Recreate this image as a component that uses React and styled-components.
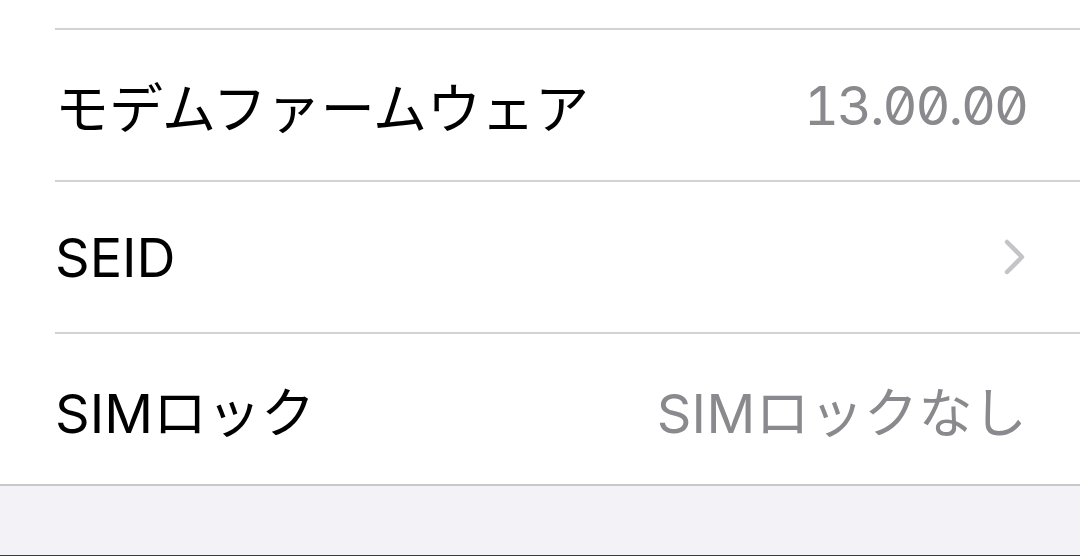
import styled, { createGlobalStyle } from "styled-components";

const GlobalStyle = createGlobalStyle`
  html, body {
    margin: 0;
    padding: 0;
    background: #f2f2f7;
  }
  body {
    font-family: "Inter", "Noto Sans CJK JP", sans-serif;
    -webkit-font-smoothing: antialiased;
  }
`;

const Page = styled.div`
  width: 1080px;
  height: 556px;
  display: flex;
  flex-direction: column;
  background: #f2f2f7;
  overflow: hidden;
  box-sizing: border-box;
  border-bottom: 1px solid #3a3a3c;
`;

const Group = styled.div`
  background: #fff;
  border-bottom: 2px solid #c8c7cc;
  padding-top: 28px;
  padding-left: 55px;
`;

const Row = styled.div`
  height: 152px;
  box-sizing: border-box;
  border-top: 2px solid #d1d1d6;
  display: flex;
  align-items: center;
  justify-content: space-between;
  padding-right: 53px;
`;

const Label = styled.span`
  font-family: "Inter", "Noto Sans CJK JP", sans-serif;
  font-size: 54px;
  color: #000;
  letter-spacing: 0;
`;

const Value = styled.span`
  font-family: "Inter", "Noto Sans CJK JP", sans-serif;
  font-size: 54px;
  font-weight: 400;
  color: #8a8a8e;
  font-feature-settings: ${(p) => (p.$numeric ? '"tnum" 1, "zero" 1' : "normal")};
  letter-spacing: ${(p) => (p.$numeric ? "-2px" : "0.3px")};
`;

const Chevron = () => (
  <svg width="24" height="36" viewBox="0 0 24 36">
    <path
      d="M4 3 L19 18 L4 33"
      fill="none"
      stroke="#c4c4c7"
      strokeWidth="4.5"
      strokeLinecap="round"
      strokeLinejoin="round"
    />
  </svg>
);

const rows = [
  { label: "モデムファームウェア", value: "13.00.00", numeric: true },
  { label: "SEID", chevron: true },
  { label: "SIMロック", value: "SIMロックなし" },
];

export default function App() {
  return (
    <>
      <GlobalStyle />
      <Page>
        <Group>
          {rows.map((row) => (
            <Row key={row.label}>
              <Label>{row.label}</Label>
              {row.chevron ? (
                <Chevron />
              ) : (
                <Value $numeric={row.numeric}>{row.value}</Value>
              )}
            </Row>
          ))}
        </Group>
      </Page>
    </>
  );
}
